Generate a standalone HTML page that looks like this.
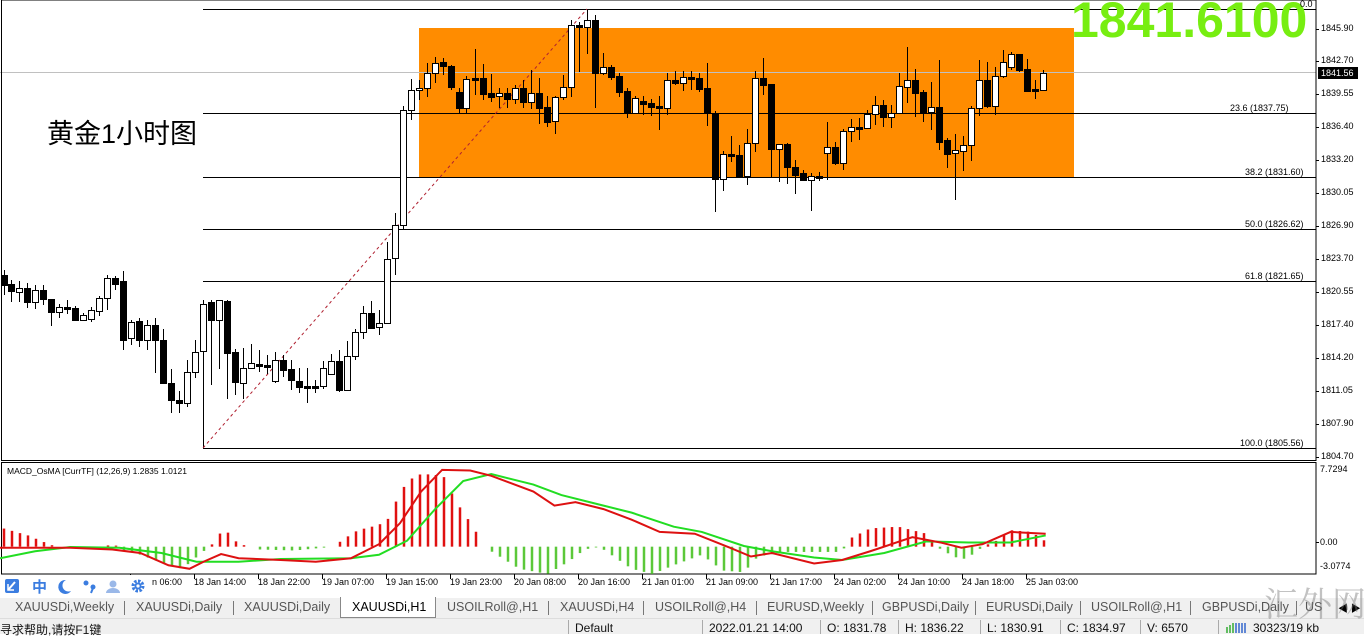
<!DOCTYPE html>
<html><head><meta charset="utf-8">
<style>
*{margin:0;padding:0;box-sizing:border-box}
body{width:1364px;height:634px;overflow:hidden;background:#fff;position:relative;font-family:"Liberation Sans","Noto Sans CJK SC",sans-serif}
.ax{position:absolute;font-size:9px;color:#000;font-family:"Liberation Sans",sans-serif;white-space:nowrap}
.tab{position:absolute;top:600px;font-size:12.5px;color:#555;white-space:nowrap}
.sep{position:absolute;top:601px;width:1px;height:14px;background:#777}
.st{position:absolute;top:621px;font-size:12px;color:#111;white-space:nowrap}
.ss{position:absolute;top:620px;width:1px;height:14px;background:#aaa}
</style></head><body>
<svg id="s" width="1364" height="634" style="position:absolute;left:0;top:0" xmlns="http://www.w3.org/2000/svg">
<rect x="419" y="28" width="655" height="149" fill="#ff8c00"/>
<line x1="0" y1="72.5" x2="1316" y2="72.5" stroke="#c0c0c0"/>
<g stroke="#000" stroke-width="1">
<line x1="203" y1="9.5" x2="1316" y2="9.5"/>
<line x1="203" y1="113.5" x2="1316" y2="113.5"/>
<line x1="203" y1="177.5" x2="1316" y2="177.5"/>
<line x1="203" y1="229.5" x2="1316" y2="229.5"/>
<line x1="203" y1="281.5" x2="1316" y2="281.5"/>
<line x1="203" y1="448.5" x2="1316" y2="448.5"/>
<line x1="203.5" y1="300" x2="203.5" y2="448"/>
</g>
<line x1="203" y1="448" x2="587" y2="9" stroke="#b02030" stroke-dasharray="3,3"/>
<g id="cd"></g>
<rect x="1.5" y="0" width="1314.5" height="460.5" fill="none" stroke="#000"/>
<rect x="1.5" y="462.5" width="1314.5" height="111.5" fill="none" stroke="#000"/>
<g id="mc"></g>
<g transform="translate(0,460) scale(0.7018,0.3509)" fill="none">
<polyline vector-effect="non-scaling-stroke" stroke="#22dd22" stroke-width="2" points="0,280 50,260 100,248 170,250 230,265 280,290 340,290 400,282 500,280 540,270 580,230 620,140 660,60 700,40 760,70 800,100 860,130 900,150 960,190 1000,205 1060,245 1100,260 1160,278 1200,285 1260,265 1320,232 1380,235 1440,235 1490,215"/>
<polyline vector-effect="non-scaling-stroke" stroke="#dd1111" stroke-width="2" points="0,250 100,250 160,255 200,265 240,300 270,310 290,290 315,268 340,280 400,285 450,290 500,280 540,240 570,180 600,90 630,28 670,30 700,45 760,90 790,130 820,120 860,140 900,170 940,205 990,210 1040,250 1070,275 1100,265 1160,295 1200,285 1240,260 1300,220 1340,235 1370,250 1400,240 1440,205 1490,210"/>
</g>
<g id="tk" stroke="#000"></g>
</svg>
<div style="position:absolute;left:1071px;top:-9px;font:bold 50px 'Liberation Sans',sans-serif;color:#77ee11;white-space:nowrap;transform:scaleX(1.0);">1841.6100</div>
<div style="position:absolute;left:47px;top:112px;font-size:27px;color:#000;font-family:'Liberation Sans','Noto Sans CJK SC',sans-serif;white-space:nowrap">黄金1小时图</div>
<div class="ax" style="left:1300px;top:-1px">0.0</div>
<div class="ax" style="left:1230px;top:103px">23.6 (1837.75)</div>
<div class="ax" style="left:1245px;top:167px">38.2 (1831.60)</div>
<div class="ax" style="left:1245px;top:219px">50.0 (1826.62)</div>
<div class="ax" style="left:1245px;top:271px">61.8 (1821.65)</div>
<div class="ax" style="left:1240px;top:438px">100.0 (1805.56)</div>
<div id="ra"></div>
<div style="position:absolute;left:1318px;top:67px;width:40px;height:12px;background:#000;color:#fff;font-size:9px;padding-left:3px;line-height:12px">1841.56</div>
<div class="ax" style="left:7px;top:466px;font-size:8.5px">MACD_OsMA [CurrTF] (12,26,9) 1.2835 1.0121</div>
<div class="ax" style="left:1320px;top:464px">7.7294</div>
<div class="ax" style="left:1320px;top:537px">0.00</div>
<div class="ax" style="left:1320px;top:561px">-3.0774</div>
<div id="tl"></div>
<div style="position:absolute;left:0;top:575px;width:152px;height:23px;background:#fff"></div>
<svg style="position:absolute;left:0;top:576px" width="152" height="22">
<rect x="5" y="3" width="14" height="14" rx="2" fill="#3b7de0"/><path d="M8 14 L15 6" stroke="#fff" stroke-width="2"/><path d="M8 8 v6 h6" stroke="#fff" stroke-width="1.5" fill="none"/>
<text x="32" y="16" font-size="15" font-weight="bold" fill="#3b7de0" font-family="Noto Sans CJK SC,sans-serif">中</text>
<path d="M66 4 a7 7 0 1 0 5 11 a6 6 0 0 1 -5 -11z" fill="#3b7de0"/>
<circle cx="86" cy="7" r="2.5" fill="#3b7de0"/><circle cx="93" cy="11" r="2.5" fill="#3b7de0"/><path d="M93 12 l-2 5" stroke="#3b7de0" stroke-width="2"/>
<circle cx="113" cy="8" r="3.5" fill="#9ab8e8"/><path d="M106 17 a7 5 0 0 1 14 0z" fill="#9ab8e8"/>
<circle cx="138" cy="10" r="5" fill="none" stroke="#3b7de0" stroke-width="3" stroke-dasharray="2.5,1.4"/><circle cx="138" cy="10" r="3.5" fill="#3b7de0"/><circle cx="138" cy="10" r="1.6" fill="#fff"/>
</svg>
<div style="position:absolute;left:0;top:598px;width:1364px;height:20px;background:#f0f0f0"></div>
<div style="position:absolute;left:340px;top:597px;width:96px;height:21px;background:#fff;border:1px solid #888;border-top:none"></div>
<div class="tab" style="left:15px">XAUUSDi,Weekly</div><div class="sep" style="left:124px"></div>
<div class="tab" style="left:136px">XAUUSDi,Daily</div><div class="sep" style="left:233px"></div>
<div class="tab" style="left:244px">XAUUSDi,Daily</div>
<div class="tab" style="left:352px;color:#000">XAUUSDi,H1</div>
<div class="tab" style="left:447px">USOILRoll@,H1</div><div class="sep" style="left:548px"></div>
<div class="tab" style="left:560px">XAUUSDi,H4</div><div class="sep" style="left:643px"></div>
<div class="tab" style="left:655px">USOILRoll@,H4</div><div class="sep" style="left:756px"></div>
<div class="tab" style="left:767px">EURUSD,Weekly</div><div class="sep" style="left:872px"></div>
<div class="tab" style="left:882px">GBPUSDi,Daily</div><div class="sep" style="left:975px"></div>
<div class="tab" style="left:986px">EURUSDi,Daily</div><div class="sep" style="left:1080px"></div>
<div class="tab" style="left:1091px">USOILRoll@,H1</div><div class="sep" style="left:1190px"></div>
<div class="tab" style="left:1202px">GBPUSDi,Daily</div><div class="sep" style="left:1296px"></div>
<div class="tab" style="left:1305px">US</div>
<div style="position:absolute;left:1338px;top:600px;font-size:10px;color:#000;white-space:nowrap">◀ ▶</div>
<div style="position:absolute;left:0;top:618px;width:1364px;height:16px;background:#f0f0f0;border-top:1px solid #ddd"></div>
<div class="st" style="left:0">寻求帮助,请按F1键</div>
<div class="ss" style="left:568px"></div><div class="st" style="left:575px">Default</div>
<div class="ss" style="left:702px"></div><div class="st" style="left:709px">2022.01.21 14:00</div>
<div class="ss" style="left:820px"></div><div class="st" style="left:827px">O: 1831.78</div>
<div class="ss" style="left:898px"></div><div class="st" style="left:905px">H: 1836.22</div>
<div class="ss" style="left:980px"></div><div class="st" style="left:987px">L: 1830.91</div>
<div class="ss" style="left:1060px"></div><div class="st" style="left:1067px">C: 1834.97</div>
<div class="ss" style="left:1140px"></div><div class="st" style="left:1147px">V: 6570</div>
<div class="ss" style="left:1218px"></div>
<svg style="position:absolute;left:1225px;top:622px" width="24" height="11"><g stroke="#3a3" stroke-width="1.5"><line x1="2" y1="11" x2="2" y2="5"/><line x1="5" y1="11" x2="5" y2="3"/><line x1="8" y1="11" x2="8" y2="1"/></g><g stroke="#36c" stroke-width="1.5"><line x1="11" y1="11" x2="11" y2="1"/><line x1="14" y1="11" x2="14" y2="1"/><line x1="17" y1="11" x2="17" y2="1"/><line x1="20" y1="11" x2="20" y2="1"/></g></svg>
<div class="st" style="left:1253px">30323/19 kb</div>
<div style="position:absolute;left:1264px;top:582px;font-size:34px;line-height:40px;color:rgba(120,120,120,0.45);font-family:'Noto Serif CJK SC',serif;white-space:nowrap">汇外网</div>
<script>
var NS="http://www.w3.org/2000/svg";
function el(p,t,a){var e=document.createElementNS(NS,t);for(var k in a)e.setAttribute(k,a[k]);p.appendChild(e);return e;}
var C=[[4,275,285,270,295,0],[11,284,291,280,302,0],[19,288,292,281,302,1],[27,288,302,283,308,0],[35,290,302,285,309,1],[43,290,299,285,305,0],[51,299,312,299,326,0],[59,307,312,304,318,1],[67,307,309,300,314,0],[75,308,320,306,320,0],[83,315,320,313,320,1],[91,310,319,307,322,1],[99,298,311,296,316,1],[107,278,298,275,310,1],[115,278,284,276,290,0],[123,281,340,271,350,0],[131,322,338,320,345,1],[139,321,340,318,347,0],[147,325,340,320,350,1],[155,325,340,318,373,0],[163,340,383,329,383,0],[171,383,400,369,413,0],[179,400,403,391,413,0],[187,372,403,360,407,1],[195,352,372,340,378,1],[203,304,351,300,378,1],[211,302,320,300,385,0],[219,300,320,300,369,1],[227,301,353,300,399,0],[235,352,382,349,395,0],[243,368,383,348,399,1],[251,363,368,344,368,1],[259,364,366,350,372,0],[267,365,367,355,374,0],[275,360,381,352,383,1],[283,360,370,355,377,0],[291,369,380,360,390,0],[299,381,387,368,393,0],[307,386,388,368,403,0],[315,386,388,380,393,0],[323,368,386,361,389,1],[331,361,374,354,375,1],[339,361,390,350,392,0],[347,356,390,341,391,1],[355,332,356,329,360,1],[363,313,332,306,339,1],[371,313,328,301,328,0],[379,323,327,310,335,1],[387,259,323,242,324,1],[395,225,258,213,275,1],[403,110,225,106,230,1],[411,90,110,79,120,1],[419,88,90,80,100,1],[427,73,88,63,97,1],[435,63,73,57,83,1],[443,62,66,58,75,0],[451,66,87,65,90,0],[459,92,108,88,113,0],[466,79,108,76,113,1],[475,78,80,49,95,0],[483,78,94,64,100,0],[491,93,97,74,102,0],[499,93,96,88,108,1],[507,93,99,88,108,0],[515,88,99,85,104,1],[523,88,102,80,108,0],[531,93,102,70,109,1],[539,93,108,78,124,0],[547,107,122,96,127,0],[555,97,121,96,134,1],[563,87,97,75,100,1],[571,25,87,20,97,1],[579,25,27,22,72,0],[587,20,27,10,54,1],[595,20,73,15,108,0],[603,67,73,53,75,1],[611,67,77,65,80,0],[619,76,92,73,97,0],[627,91,113,88,118,0],[635,98,113,96,113,1],[643,101,104,96,115,0],[651,103,107,99,116,0],[659,106,108,96,130,0],[667,80,108,73,115,1],[675,80,83,71,85,0],[683,77,83,71,91,1],[691,77,79,71,90,0],[699,78,89,73,92,0],[707,88,113,63,126,0],[715,113,179,111,212,0],[723,154,179,151,191,1],[731,154,156,136,162,0],[739,155,176,145,176,0],[747,143,176,129,185,1],[755,78,143,71,152,1],[763,78,85,58,95,0],[771,84,149,84,178,0],[779,144,149,144,182,1],[787,144,167,143,184,0],[795,167,175,160,194,0],[803,173,180,170,180,0],[811,176,180,173,211,1],[819,176,178,172,181,0],[827,147,153,122,180,1],[835,147,163,142,165,0],[843,131,163,129,170,1],[851,127,131,119,142,1],[859,127,129,118,140,0],[867,114,128,110,128,1],[875,105,114,96,125,1],[883,105,117,100,127,0],[891,113,117,105,128,1],[899,86,113,73,114,1],[907,80,87,47,103,1],[915,80,93,69,117,0],[923,92,112,90,122,0],[931,107,112,82,130,1],[939,107,142,60,150,0],[947,140,154,138,168,0],[955,150,153,134,200,1],[963,145,151,136,171,1],[971,108,145,106,161,1],[979,80,108,60,116,1],[987,80,106,62,108,0],[995,76,106,67,115,1],[1003,62,76,50,78,1],[1011,54,67,52,70,1],[1019,54,70,54,72,0],[1027,69,91,59,92,0],[1035,89,91,80,99,0],[1043,73,90,70,91,1]];
var g=document.getElementById('cd');
C.forEach(function(c){el(g,'line',{x1:c[0]+.5,y1:c[3],x2:c[0]+.5,y2:c[4],stroke:'#000'});
var h=Math.max(1,c[2]-c[1]);el(g,'rect',{x:c[0]-2.5,y:c[1]+.5,width:6,height:h,fill:c[5]?'#fff':'#000',stroke:'#000'});});
var P=[[5,195],[40,215],[70,240],[80,247],[150,247],[160,238],[168,247],[172,255],[200,270],[240,300],[260,310],[290,260],[300,247],[312,210],[325,207],[340,240],[360,247],[370,255],[420,258],[460,250],[475,247],[490,225],[510,200],[540,185],[555,165],[570,90],[585,55],[600,40],[620,42],[635,50],[645,100],[660,150],[675,190],[688,247],[700,260],[740,310],[780,325],[810,290],[830,260],[845,247],[860,255],[900,310],[930,325],[960,300],[1000,270],[1030,315],[1060,320],[1080,275],[1120,262],[1200,262],[1210,225],[1240,195],[1280,190],[1320,210],[1335,247],[1345,260],[1370,285],[1390,265],[1400,247],[1420,230],[1440,200],[1470,205],[1490,232]];
function f(z){for(var i=0;i<P.length-1;i++){if(z>=P[i][0]&&z<=P[i+1][0]){var t=(z-P[i][0])/(P[i+1][0]-P[i][0]);return P[i][1]+t*(P[i+1][1]-P[i][1]);}}return 247;}
var m=document.getElementById('mc'),Z=460+247/2.85;
for(var x=4;x<=1045;x+=8){var v=460+f(x*1.425)/2.85;if(Math.abs(v-Z)<0.8)continue;el(m,'line',{x1:x,y1:Z,x2:x,y2:v,stroke:v<Z?'#e01010':'#5cc83a','stroke-width':2.5});}
var R=[['1845.90',29],['1842.70',61],['1839.55',94],['1836.40',127],['1833.20',160],['1830.05',193],['1826.90',226],['1823.70',259],['1820.55',292],['1817.40',325],['1814.20',358],['1811.05',391],['1807.90',424],['1804.70',457]];
var ra=document.getElementById('ra'),tk=document.getElementById('tk');
R.forEach(function(r){var d=document.createElement('div');d.className='ax';d.style.left='1321px';d.style.top=(r[1]-6)+'px';d.textContent=r[0];ra.appendChild(d);el(tk,'line',{x1:1316,y1:r[1]+.5,x2:1319,y2:r[1]+.5});});
el(tk,'line',{x1:1316,y1:542.5,x2:1319,y2:542.5});
var T=['18 Jan 06:00','18 Jan 14:00','18 Jan 22:00','19 Jan 07:00','19 Jan 15:00','19 Jan 23:00','20 Jan 08:00','20 Jan 16:00','21 Jan 01:00','21 Jan 09:00','21 Jan 17:00','24 Jan 02:00','24 Jan 10:00','24 Jan 18:00','25 Jan 03:00'];
var tl=document.getElementById('tl');
T.forEach(function(s,i){var x=130+64*i;var d=document.createElement('div');d.className='ax';d.style.left=x+'px';d.style.top='577px';d.textContent=s;tl.appendChild(d);el(tk,'line',{x1:x+.5,y1:574,x2:x+.5,y2:579});});
</script>
</body></html>
